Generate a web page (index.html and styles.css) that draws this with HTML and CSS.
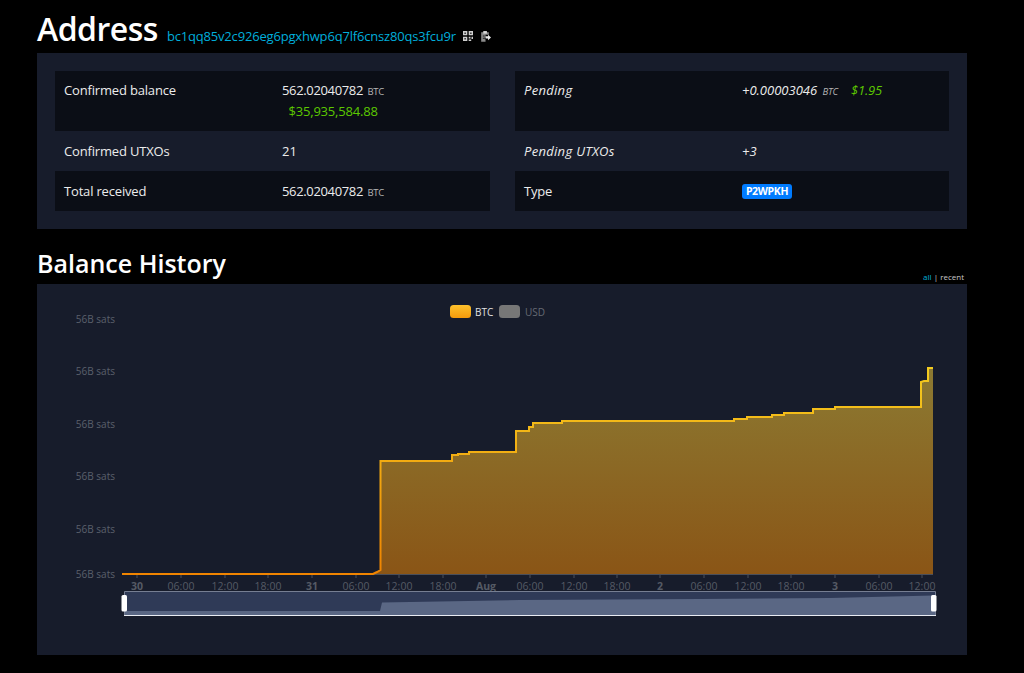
FILE: index.html
```html
<!DOCTYPE html>
<html lang="en">
<head>
<meta charset="utf-8">
<title>Address</title>
<link rel="stylesheet" href="styles.css">
</head>
<body>
<main class="page">
  <header class="address-head">
    <h1>Address</h1>
    <a class="address-link" href="#">bc1qq85v2c926eg6pgxhwp6q7lf6cnsz80qs3fcu9r</a>
    <svg class="icon qr" viewBox="0 0 10 10" width="10" height="10"><path fill="#cfcfcf" d="M0 0h4.300v4.300H0zM5.700 0H10v4.300H5.700zM0 5.700h4.300V10H0zM5.700 5.700h1.800v1.800H5.700zM8.500 5.700H10v2.300H8.500zM5.700 8.500h2.500V10H5.700z"/><path fill="#333" d="M1.400 1.400h1.500v1.500H1.400zM7.100 1.400h1.500v1.500H7.100zM1.400 7.100h1.500v1.500H1.400z"/></svg>
    <svg class="icon clip" viewBox="0 0 11 12" width="10" height="11"><path fill="#8a8a8a" d="M.2 1.400h8.400v2.600H5v3H4v2h1v2.800H.2z"/><path fill="#d8d8d8" d="M2.500 0h4v2.800h-4z"/><path fill="#ececec" d="M5 5.800h2.700V4L11 7 7.700 10V8.200H5z"/><path fill="#222" d="M2 5h2v1H2zM2 7.500h2v1H2z"/></svg>
  </header>

  <section class="panel summary">
    <div class="facts">
      <div class="row odd tall"><span class="label">Confirmed balance</span><span class="value stacked"><span><span class="num">562.02040782</span> <small>BTC</small></span><span class="usd">$35,935,584.88</span></span></div>
      <div class="row"><span class="label">Confirmed UTXOs</span><span class="value">21</span></div>
      <div class="row odd"><span class="label">Total received</span><span class="value"><span class="num">562.02040782</span> <small>BTC</small></span></div>
    </div>
    <div class="facts pending">
      <div class="row odd tall"><span class="label em">Pending</span><span class="value em"><span class="num-em">+0.00003046</span> <small class="wide">BTC</small><span class="usd inline">$1.95</span></span></div>
      <div class="row"><span class="label em">Pending UTXOs</span><span class="value em">+3</span></div>
      <div class="row odd"><span class="label">Type</span><span class="value"><span class="badge">P2WPKH</span></span></div>
    </div>
  </section>

  <header class="history-head">
    <h2>Balance History</h2>
    <p class="range"><a href="#">all</a> | recent</p>
  </header>

  <section class="panel chart">
    <svg class="plot" viewBox="37 284 930 371" width="930" height="371">
      <defs>
        <linearGradient id="fill" gradientUnits="userSpaceOnUse" x1="0" y1="368" x2="0" y2="574">
          <stop offset="0" stop-color="#8c7a32"/>
          <stop offset="1" stop-color="#8a5516"/>
        </linearGradient>
        <linearGradient id="stroke" gradientUnits="userSpaceOnUse" x1="0" y1="368" x2="0" y2="574">
          <stop offset="0" stop-color="#f4cc20"/>
          <stop offset="1" stop-color="#f08400"/>
        </linearGradient>
        <linearGradient id="swatch" x1="0" y1="0" x2="0" y2="1">
          <stop offset="0" stop-color="#fdc12c"/>
          <stop offset="1" stop-color="#f59a0c"/>
        </linearGradient>
      </defs>

      <g class="ylab">
        <text x="115" y="323">56B sats</text>
        <text x="115" y="375">56B sats</text>
        <text x="115" y="428">56B sats</text>
        <text x="115" y="480">56B sats</text>
        <text x="115" y="533">56B sats</text>
        <text x="115" y="578">56B sats</text>
      </g>

      <rect class="swatch" x="450" y="305" width="21" height="13" rx="3.500" fill="url(#swatch)"/>
      <text class="leg on" x="475" y="316">BTC</text>
      <rect x="499" y="305" width="21" height="13" rx="3.500" fill="#777"/>
      <text class="leg off" x="525" y="316">USD</text>

      <path class="axis" d="M122 574.500H933M137 575v3M181 575v3M225 575v3M268 575v3M312 575v3M356 575v3M399 575v3M443 575v3M486 575v3M530 575v3M574 575v3M617 575v3M660 575v3M704 575v3M748 575v3M791 575v3M835 575v3M879 575v3M922 575v3"/>

      <path fill="url(#fill)" d="M373 574 377 572 380 570V461H452V455H458V454H469V452H516V431H529V427H533V423H562V421H734V419H747V417H772V415H784V413H813V409H835V407H921V382L928 380V368H933V574Z"/>
      <path fill="none" stroke="url(#stroke)" stroke-width="2" d="M122 574H373L377 572 380.500 570V461H452V455H458V454H469V452H516V431H529V427H533V423H562V421H734V419H747V417H772V415H784V413H813V409H835V407H921V382L924 381H928V368H933"/>

      <g class="xlab">
        <text class="b" x="137" y="590">30</text>
        <text x="181" y="590">06:00</text>
        <text x="225" y="590">12:00</text>
        <text x="268" y="590">18:00</text>
        <text class="b" x="312" y="590">31</text>
        <text x="356" y="590">06:00</text>
        <text x="399" y="590">12:00</text>
        <text x="443" y="590">18:00</text>
        <text class="b" x="486" y="590">Aug</text>
        <text x="530" y="590">06:00</text>
        <text x="574" y="590">12:00</text>
        <text x="617" y="590">18:00</text>
        <text class="b" x="660" y="590">2</text>
        <text x="704" y="590">06:00</text>
        <text x="748" y="590">12:00</text>
        <text x="791" y="590">18:00</text>
        <text class="b" x="835" y="590">3</text>
        <text x="879" y="590">06:00</text>
        <text x="922" y="590">12:00</text>
      </g>

      <rect x="124" y="591.500" width="811" height="24" fill="#2f3a57"/>
      <path fill="#5a6784" d="M124 611H380L382 602.500 520 600 700 599 830 598 933 595.500 935 595V615H124Z"/>
      <path fill="none" stroke="#767e92" d="M124.500 615V591.500H935.500V615"/>
      <path fill="none" stroke="#e8ebf2" d="M124 615.500H936"/>
      <rect x="121.500" y="595" width="5.500" height="16.500" rx="1.500" fill="#fff"/>
      <rect x="931" y="595" width="5.500" height="16.500" rx="1.500" fill="#fff"/>
    </svg>
  </section>
</main>
</body>
</html>
```

FILE: styles.css
```css
* { box-sizing: border-box; }
html, body { margin: 0; background: #000; }
body {
  color: #ececec;
  font-family: "Open Sans", "Noto Sans", sans-serif;
  font-size: 13px;
  overflow: hidden;
  height: 673px;
}
.page { width: 930px; margin-left: 37px; }
a { text-decoration: none; }

.address-head {
  height: 53px;
  display: flex;
  align-items: baseline;
  padding-top: 7px;
}
h1 {
  margin: 0;
  color: #fff;
  font-size: 32px;
  line-height: 44px;
  font-weight: 600;
  letter-spacing: -0.5px;
}
.address-link {
  margin-left: 9px;
  color: #00aedb;
  font-size: 13px;
  letter-spacing: -0.18px;
}
.icon { flex: none; align-self: flex-start; }
.qr { margin: 24px 0 0 7px; }
.clip { margin: 24px 0 0 8px; }

.panel { background: #171c2b; }
.summary {
  height: 176px;
  padding: 18px;
  display: grid;
  grid-template-columns: 435px 434px;
  column-gap: 25px;
}
.row {
  height: 40px;
  display: flex;
  align-items: flex-start;
  padding: 11px 9px 0;
  line-height: 18px;
}
.tall { height: 60px; padding-top: 10px; }
.odd { background: #0b0e16; }
.label { width: 218px; flex: none; letter-spacing: -0.17px; }
.label.em { letter-spacing: 0.3px; }
.em { font-style: italic; }
.stacked { display: inline-flex; flex-direction: column; align-items: center; row-gap: 1px; }
.num { letter-spacing: -0.35px; }
small { font-size: 9.500px; color: #b5b5b5; margin-left: 1px; letter-spacing: -0.2px; }
small.wide { margin-left: 2px; }
.usd { color: #5cc800; letter-spacing: -0.2px; }
.usd.inline { margin-left: 13px; }
.badge {
  display: block;
  width: 50px;
  height: 15px;
  margin-top: 2px;
  border-radius: 3px;
  background: #007bff;
  color: #fff;
  font-size: 10.500px;
  font-weight: 700;
  letter-spacing: -0.35px;
  line-height: 15px;
  text-align: center;
}

.history-head {
  height: 55px;
  display: flex;
  justify-content: space-between;
  align-items: flex-end;
}
h2 {
  margin: 0 0 2px;
  color: #fff;
  font-size: 25px;
  font-weight: 600;
  line-height: 38px;
}
.range {
  margin: 0 3px 1px 0;
  font-size: 8px;
  line-height: 13px;
  color: #c8c8c8;
}
.range a { color: #00aedb; }

.chart { height: 371px; }
.plot { display: block; }
.ylab text { fill: #5b606b; font-size: 10px; text-anchor: end; }
.leg { font-size: 10px; }
.leg.on { fill: #e2e2e2; }
.leg.off { fill: #666a73; }
.axis { fill: none; stroke: #4a4f5a; stroke-width: 1; }
.xlab text { fill: #555a65; font-size: 10.500px; text-anchor: middle; }
.xlab .b { font-weight: 700; }
```
